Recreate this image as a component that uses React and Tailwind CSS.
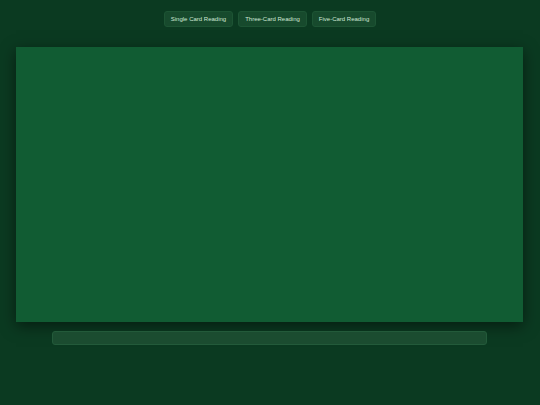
import React, { useState } from "react"

const spreads = ["Single Card Reading", "Three-Card Reading", "Five-Card Reading"]

export default function App() {
  const [spread, setSpread] = useState(spreads[0])

  return (
    <div
      className="min-h-[405px] bg-[#0b3a21] flex flex-col"
      style={{ fontFamily: '"Liberation Sans", Arial, sans-serif' }}
    >
      {/* Spread picker */}
      <div className="flex justify-center gap-[5px] pt-[11px]">
        {spreads.map((s) => (
          <button
            key={s}
            onClick={() => setSpread(s)}
            className="h-[16px] px-[6px] rounded-[3px] bg-[#174a2d] border border-[#1d5434] text-[#cfe8d6] text-[6px] leading-none"
          >
            {s}
          </button>
        ))}
      </div>

      {/* Table */}
      <div className="mt-[20px] ml-[16px] mr-[17px] h-[275px] bg-[#115c33] shadow-[0_4px_14px_rgba(0,0,0,0.5)]" />

      {/* Reading text */}
      <div className="mt-[9px] ml-[52px] mr-[53px] h-[14px] rounded-[3px] bg-[#1b4c30] border border-[#235a3a]" />
    </div>
  )
}
